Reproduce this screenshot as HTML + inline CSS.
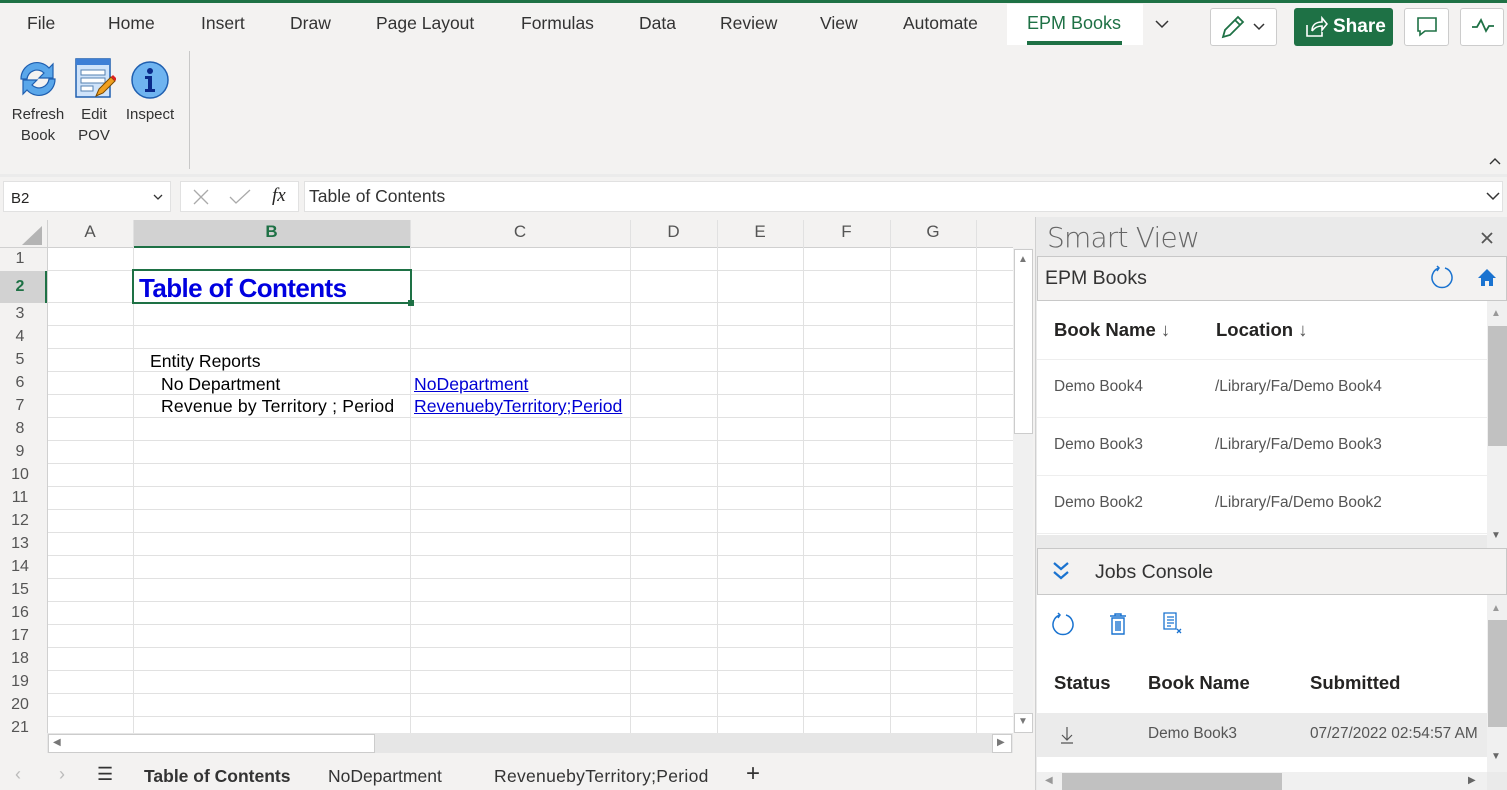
<!DOCTYPE html>
<html><head><meta charset="utf-8"><style>
*{margin:0;padding:0;box-sizing:border-box}
body{width:1507px;height:790px;overflow:hidden;background:#f3f2f1;font-family:"Liberation Sans",sans-serif;position:relative;color:#252423}
.a{position:absolute}
.tab{position:absolute;top:13px;font-size:17.5px;color:#333}
.rib{font-size:15px;color:#333;text-align:center;line-height:21px}
.rn{position:absolute;left:0;width:40px;text-align:center;font-size:16px;color:#555}
.ch{position:absolute;top:222px;font-size:17px;color:#555;text-align:center}
.vl{position:absolute;top:248px;height:485px;width:1px;background:#e1e1e1}
.cell{position:absolute;font-size:17.6px;color:#000}
.lnk{color:#0000d4;text-decoration:underline}
.pt{position:absolute;font-size:15.4px;color:#555}
.ph{position:absolute;font-size:18.5px;color:#252423;font-weight:bold}
</style></head><body>
<div class="a" style="left:0;top:0;width:1507px;height:3px;background:#1e7145"></div>
<div class="tab" style="left:27px">File</div>
<div class="tab" style="left:108px">Home</div>
<div class="tab" style="left:201px">Insert</div>
<div class="tab" style="left:290px">Draw</div>
<div class="tab" style="left:376px">Page Layout</div>
<div class="tab" style="left:521px">Formulas</div>
<div class="tab" style="left:639px">Data</div>
<div class="tab" style="left:720px">Review</div>
<div class="tab" style="left:820px">View</div>
<div class="tab" style="left:903px">Automate</div>
<div class="a" style="left:1007px;top:4px;width:136px;height:41px;background:#fff"></div>
<div class="tab" style="left:1027px;color:#1e7145;font-size:18px">EPM Books</div>
<div class="a" style="left:1027px;top:41px;width:95px;height:4px;background:#1e7145"></div>
<svg class="a" style="left:1154px;top:18px" width="16" height="12"><path d="M2 3l6 6 6-6" stroke="#333" stroke-width="1.5" fill="none"/></svg>
<div class="a" style="left:1210px;top:8px;width:67px;height:38px;background:#fff;border:1px solid #ccc;border-radius:3px"></div>
<svg class="a" style="left:1220px;top:14px" width="50" height="26"><path d="M3 23l2-7 13-13 5 5-13 13z M15 6l5 5" stroke="#1e7145" stroke-width="1.8" fill="none"/><path d="M34 10l5 5 5-5" stroke="#333" stroke-width="1.5" fill="none"/></svg>
<div class="a" style="left:1294px;top:8px;width:99px;height:38px;background:#1e7145;border-radius:3px"></div>
<svg class="a" style="left:1304px;top:15px" width="24" height="24"><path d="M3 10v11h15v-4 M8 16c0-6 4-9 10-9V3l5 6-5 6v-4c-4 0-7 1-10 5" stroke="#fff" stroke-width="1.6" fill="none"/></svg>
<div class="a" style="left:1333px;top:16px;color:#fff;font-weight:bold;font-size:19px">Share</div>
<div class="a" style="left:1404px;top:8px;width:45px;height:38px;background:#fff;border:1px solid #ccc;border-radius:3px"></div>
<svg class="a" style="left:1416px;top:16px" width="22" height="22"><path d="M2 2h18v13H9l-5 4v-4H2z" stroke="#1e7145" stroke-width="1.6" fill="none"/></svg>
<div class="a" style="left:1460px;top:8px;width:44px;height:38px;background:#fff;border:1px solid #ccc;border-radius:3px"></div>
<svg class="a" style="left:1470px;top:17px" width="26" height="18"><path d="M2 10h5l4-7 5 11 3-5h5" stroke="#1e7145" stroke-width="1.8" fill="none"/></svg>
<!-- ribbon icons -->
<svg class="a" style="left:16px;top:57px" width="44" height="44"><path d="M5 22a16 16 0 0 1 28-11l4-4v14H23l5-5a10 10 0 0 0-17 6z" fill="#5aa7ea" stroke="#1f5fb0" stroke-width="1.2"/><path d="M39 22a16 16 0 0 1-28 11l-4 4V23h14l-5 5a10 10 0 0 0 17-6z" fill="#5aa7ea" stroke="#1f5fb0" stroke-width="1.2"/></svg>
<svg class="a" style="left:74px;top:58px" width="42" height="42"><rect x="2" y="1" width="34" height="38" fill="#cfe3fa" stroke="#1f5fb0" stroke-width="1.5"/><rect x="2" y="1" width="34" height="6" fill="#3d7fd6"/><rect x="7" y="12" width="24" height="5" fill="#fff" stroke="#5580b0"/><rect x="7" y="20" width="24" height="5" fill="#fff" stroke="#5580b0"/><rect x="7" y="28" width="12" height="5" fill="#fff" stroke="#5580b0"/><path d="M22 38l3-7 12-12 4 4-12 12z" fill="#f0a020" stroke="#7a4a00"/><path d="M37 19l4 4 2-2-4-4z" fill="#d22"/></svg>
<svg class="a" style="left:130px;top:60px" width="40" height="40"><circle cx="20" cy="20" r="18" fill="#6fb4f0" stroke="#1f5fb0" stroke-width="1.5"/><circle cx="20" cy="11" r="3" fill="#0a2a8a"/><path d="M15 16h7v13h3v3H15v-3h3V19h-3z" fill="#0a2a8a"/></svg>
<div class="a rib" style="left:8px;top:104px;width:60px">Refresh<br>Book</div>
<div class="a rib" style="left:74px;top:104px;width:40px">Edit<br>POV</div>
<div class="a rib" style="left:120px;top:104px;width:60px">Inspect</div>
<div class="a" style="left:189px;top:51px;width:1px;height:118px;background:#c8c8c8"></div>
<svg class="a" style="left:1488px;top:156px" width="14" height="10"><path d="M2 8l5-5 5 5" stroke="#333" stroke-width="1.4" fill="none"/></svg>
<!-- formula bar -->
<div class="a" style="left:0;top:174px;width:1507px;height:3px;background:#ebebeb"></div>
<div class="a" style="left:3px;top:181px;width:168px;height:31px;background:#fff;border:1px solid #e1e1e1"></div>
<div class="a" style="left:11px;top:190px;font-size:15px">B2</div>
<svg class="a" style="left:153px;top:193px" width="10" height="8"><path d="M1 2l4 4 4-4" stroke="#333" stroke-width="1.3" fill="none"/></svg>
<div class="a" style="left:180px;top:181px;width:119px;height:31px;background:#fff;border:1px solid #e1e1e1"></div>
<svg class="a" style="left:192px;top:188px" width="18" height="18"><path d="M2 2l14 14M16 2L2 16" stroke="#aaa" stroke-width="1.3"/></svg>
<svg class="a" style="left:228px;top:188px" width="24" height="18"><path d="M2 9l6 6L22 2" stroke="#aaa" stroke-width="1.3" fill="none"/></svg>
<div class="a" style="left:272px;top:185px;font-family:'Liberation Serif',serif;font-style:italic;font-size:19px">fx</div>
<div class="a" style="left:304px;top:181px;width:1199px;height:31px;background:#fff;border:1px solid #e1e1e1"></div>
<div class="a" style="left:309px;top:186px;font-size:17.5px;color:#333">Table of Contents</div>
<svg class="a" style="left:1485px;top:190px" width="16" height="12"><path d="M2 3l6 6 6-6" stroke="#333" stroke-width="1.5" fill="none"/></svg>
<!-- grid -->
<div class="a" style="left:0;top:218px;width:1035px;height:572px;background:#f3f2f1"></div>
<div class="a" style="left:47px;top:248px;width:966px;height:485px;background:#fff repeating-linear-gradient(to bottom,transparent 0 22px,#e1e1e1 22px 23px);background-position:0 9px"></div>
<div class="a" style="left:47px;top:248px;width:966px;height:55px;background:#fff"></div>
<div class="a" style="left:47px;top:270px;width:966px;height:1px;background:#e1e1e1"></div>
<div class="a" style="left:47px;top:302px;width:966px;height:1px;background:#e1e1e1"></div>
<div class="a" style="left:0;top:247px;width:1013px;height:1px;background:#d0d0d0"></div>
<div class="a" style="left:47px;top:220px;width:1px;height:513px;background:#d0d0d0"></div>
<svg class="a" style="left:20px;top:224px" width="24" height="22"><path d="M22 2v19H2z" fill="#b4b4b4"/></svg>
<div class="a" style="left:133px;top:220px;width:277px;height:28px;background:#d2d2d2;border-bottom:2px solid #1e7145"></div>
<div class="ch" style="left:47px;width:86px">A</div>
<div class="ch" style="left:133px;width:277px;color:#1e7145;font-weight:bold">B</div>
<div class="ch" style="left:410px;width:220px">C</div>
<div class="ch" style="left:630px;width:87px">D</div>
<div class="ch" style="left:717px;width:86px">E</div>
<div class="ch" style="left:803px;width:87px">F</div>
<div class="ch" style="left:890px;width:86px">G</div>
<div class="vl" style="left:133px;top:220px;height:513px"></div><div class="vl" style="left:410px;top:220px;height:513px"></div><div class="vl" style="left:630px;top:220px;height:513px"></div><div class="vl" style="left:717px;top:220px;height:513px"></div><div class="vl" style="left:803px;top:220px;height:513px"></div><div class="vl" style="left:890px;top:220px;height:513px"></div><div class="vl" style="left:976px;top:220px;height:513px"></div>
<div class="a" style="left:0;top:271px;width:47px;height:32px;background:#d2d2d2;border-right:2px solid #1e7145"></div>
<div class="rn" style="top:250px">1</div>
<div class="rn" style="top:278px;color:#1e7145;font-weight:bold">2</div>
<div class="rn" style="top:305px">3</div><div class="rn" style="top:328px">4</div><div class="rn" style="top:351px">5</div><div class="rn" style="top:374px">6</div><div class="rn" style="top:397px">7</div><div class="rn" style="top:420px">8</div><div class="rn" style="top:443px">9</div><div class="rn" style="top:466px">10</div><div class="rn" style="top:489px">11</div><div class="rn" style="top:512px">12</div><div class="rn" style="top:535px">13</div><div class="rn" style="top:558px">14</div><div class="rn" style="top:581px">15</div><div class="rn" style="top:604px">16</div><div class="rn" style="top:627px">17</div><div class="rn" style="top:650px">18</div><div class="rn" style="top:673px">19</div><div class="rn" style="top:696px">20</div><div class="rn" style="top:719px;height:14px;overflow:hidden">21</div>
<div class="a" style="left:132px;top:269px;width:280px;height:35px;border:2px solid #1e7145"></div>
<div class="a" style="left:408px;top:300px;width:6px;height:6px;background:#1e7145"></div>
<div class="cell" style="left:139px;top:273px;font-size:26px;font-weight:bold;color:#0000e0;letter-spacing:-0.6px">Table of Contents</div>
<div class="cell" style="left:150px;top:351px">Entity Reports</div>
<div class="cell" style="left:161px;top:374px">No Department</div>
<div class="cell" style="left:161px;top:396px;letter-spacing:0.2px">Revenue by Territory ; Period</div>
<div class="cell lnk" style="left:414px;top:374px">NoDepartment</div>
<div class="cell lnk" style="left:414px;top:396px">RevenuebyTerritory;Period</div>
<!-- scrollbars -->
<div class="a" style="left:1013px;top:248px;width:20px;height:485px;background:#f0f0f0"></div>
<div class="a" style="left:1014px;top:249px;width:19px;height:185px;background:#fff;border:1px solid #ccc"></div>
<div class="a" style="left:1018px;top:254px;font-size:10px;color:#777">▲</div>
<div class="a" style="left:1014px;top:713px;width:19px;height:20px;background:#fff;border:1px solid #ccc"></div>
<div class="a" style="left:1018px;top:716px;font-size:10px;color:#777">▼</div>
<div class="a" style="left:47px;top:733px;width:966px;height:20px;background:#e6e6e6"></div>
<div class="a" style="left:48px;top:734px;width:327px;height:19px;background:#fff;border:1px solid #ccc"></div>
<div class="a" style="left:53px;top:737px;font-size:10px;color:#777">◀</div>
<div class="a" style="left:992px;top:734px;width:20px;height:19px;background:#fff;border:1px solid #ccc"></div>
<div class="a" style="left:997px;top:737px;font-size:10px;color:#777">▶</div>
<!-- sheet tabs -->
<div class="a" style="left:15px;top:764px;font-size:18px;color:#bbb">‹</div>
<div class="a" style="left:59px;top:764px;font-size:18px;color:#bbb">›</div>
<div class="a" style="left:97px;top:764px;font-size:18px;color:#333">☰</div>
<div class="a" style="left:144px;top:766px;font-size:17.5px;font-weight:bold;color:#333">Table of Contents</div>
<div class="a" style="left:328px;top:766px;font-size:17.5px;color:#333">NoDepartment</div>
<div class="a" style="left:494px;top:766px;font-size:17.5px;color:#333;letter-spacing:0.3px">RevenuebyTerritory;Period</div>
<div class="a" style="left:746px;top:760px;font-size:24px;color:#333">+</div>
<!-- Smart View panel -->
<div class="a" style="left:1035px;top:217px;width:472px;height:573px;background:#eaeaea;border-left:1px solid #d0d0d0"></div>
<div class="a" style="left:1047px;top:221px;font-size:28px;color:#666;font-family:'DejaVu Sans',sans-serif;font-weight:300;letter-spacing:-0.8px">Smart View</div>
<svg class="a" style="left:1480px;top:231px" width="14" height="14"><path d="M2 2l10 10M12 2L2 12" stroke="#555" stroke-width="1.8"/></svg>
<div class="a" style="left:1037px;top:256px;width:470px;height:45px;background:#f3f2f1;border:1px solid #c8c8c8"></div>
<div class="a" style="left:1045px;top:267px;font-size:19.5px;color:#333">EPM Books</div>
<svg class="a" style="left:1431px;top:265px" width="24" height="24"><path d="M8 3a10 10 0 1 0 6 0" stroke="#1a73d0" stroke-width="1.5" fill="none"/><path d="M6 1l2 2-2 3" stroke="#1a73d0" stroke-width="1.5" fill="none"/></svg>
<svg class="a" style="left:1477px;top:268px" width="20" height="19"><path d="M10 1L1 10h3v8h4v-5h4v5h4v-8h3z" fill="#1a73d0"/></svg>
<div class="a" style="left:1037px;top:301px;width:450px;height:234px;background:#fff"></div>
<div class="a" style="left:1487px;top:301px;width:20px;height:247px;background:#f0f0f0"></div>
<div class="a" style="left:1488px;top:326px;width:19px;height:120px;background:#c1c1c1"></div>
<div class="a" style="left:1491px;top:308px;font-size:10px;color:#999">▲</div>
<div class="a" style="left:1491px;top:530px;font-size:10px;color:#666">▼</div>
<div class="ph" style="left:1054px;top:319px">Book Name <span style="font-weight:normal;color:#555">↓</span></div>
<div class="ph" style="left:1216px;top:319px">Location <span style="font-weight:normal;color:#555">↓</span></div>
<div class="a" style="left:1037px;top:359px;width:450px;height:1px;background:#eee"></div>
<div class="a" style="left:1037px;top:417px;width:450px;height:1px;background:#eee"></div>
<div class="a" style="left:1037px;top:475px;width:450px;height:1px;background:#eee"></div>
<div class="a" style="left:1037px;top:533px;width:450px;height:1px;background:#eee"></div>
<div class="pt" style="left:1054px;top:378px">Demo Book4</div><div class="pt" style="left:1215px;top:378px">/Library/Fa/Demo Book4</div>
<div class="pt" style="left:1054px;top:436px">Demo Book3</div><div class="pt" style="left:1215px;top:436px">/Library/Fa/Demo Book3</div>
<div class="pt" style="left:1054px;top:494px">Demo Book2</div><div class="pt" style="left:1215px;top:494px">/Library/Fa/Demo Book2</div>
<div class="a" style="left:1037px;top:548px;width:470px;height:47px;background:#f3f2f1;border:1px solid #c8c8c8"></div>
<svg class="a" style="left:1052px;top:560px" width="18" height="22"><path d="M2 3l7 6 7-6M2 12l7 6 7-6" stroke="#1a73d0" stroke-width="2.2" fill="none"/></svg>
<div class="a" style="left:1095px;top:561px;font-size:19.5px;color:#333">Jobs Console</div>
<div class="a" style="left:1037px;top:595px;width:450px;height:195px;background:#fff"></div>
<div class="a" style="left:1487px;top:595px;width:20px;height:177px;background:#f0f0f0"></div>
<div class="a" style="left:1488px;top:620px;width:19px;height:107px;background:#c1c1c1"></div>
<div class="a" style="left:1491px;top:603px;font-size:10px;color:#999">▲</div>
<div class="a" style="left:1491px;top:751px;font-size:10px;color:#666">▼</div>
<svg class="a" style="left:1052px;top:612px" width="24" height="24"><path d="M8 3a10 10 0 1 0 6 0" stroke="#1a73d0" stroke-width="1.5" fill="none"/><path d="M6 1l2 2-2 3" stroke="#1a73d0" stroke-width="1.5" fill="none"/></svg>
<svg class="a" style="left:1108px;top:612px" width="20" height="24"><path d="M2 4h16M7 4V2h6v2M4 6h12v16H4z M8 9v10M10 9v10M12 9v10" stroke="#1a73d0" stroke-width="1.4" fill="none"/></svg>
<svg class="a" style="left:1162px;top:612px" width="24" height="24"><path d="M2 1h12v16H2z M5 5h7M5 8h7M5 11h7M5 14h4 M15 17l4 4M19 17l-4 4" stroke="#1a73d0" stroke-width="1.3" fill="none"/></svg>
<div class="ph" style="left:1054px;top:672px">Status</div>
<div class="ph" style="left:1148px;top:672px">Book Name</div>
<div class="ph" style="left:1310px;top:672px">Submitted</div>
<div class="a" style="left:1037px;top:713px;width:450px;height:44px;background:#ebebeb"></div>
<svg class="a" style="left:1060px;top:726px" width="14" height="18"><path d="M7 1v13M2 9l5 5 5-5M1 17h12" stroke="#555" stroke-width="1.2" fill="none"/></svg>
<div class="pt" style="left:1148px;top:725px">Demo Book3</div>
<div class="pt" style="left:1310px;top:725px">07/27/2022 02:54:57 AM</div>
<div class="a" style="left:1037px;top:772px;width:450px;height:18px;background:#f0f0f0"></div>
<div class="a" style="left:1062px;top:773px;width:220px;height:17px;background:#c1c1c1"></div>
<div class="a" style="left:1045px;top:775px;font-size:10px;color:#999">◀</div>
<div class="a" style="left:1468px;top:775px;font-size:10px;color:#666">▶</div>
</body></html>
